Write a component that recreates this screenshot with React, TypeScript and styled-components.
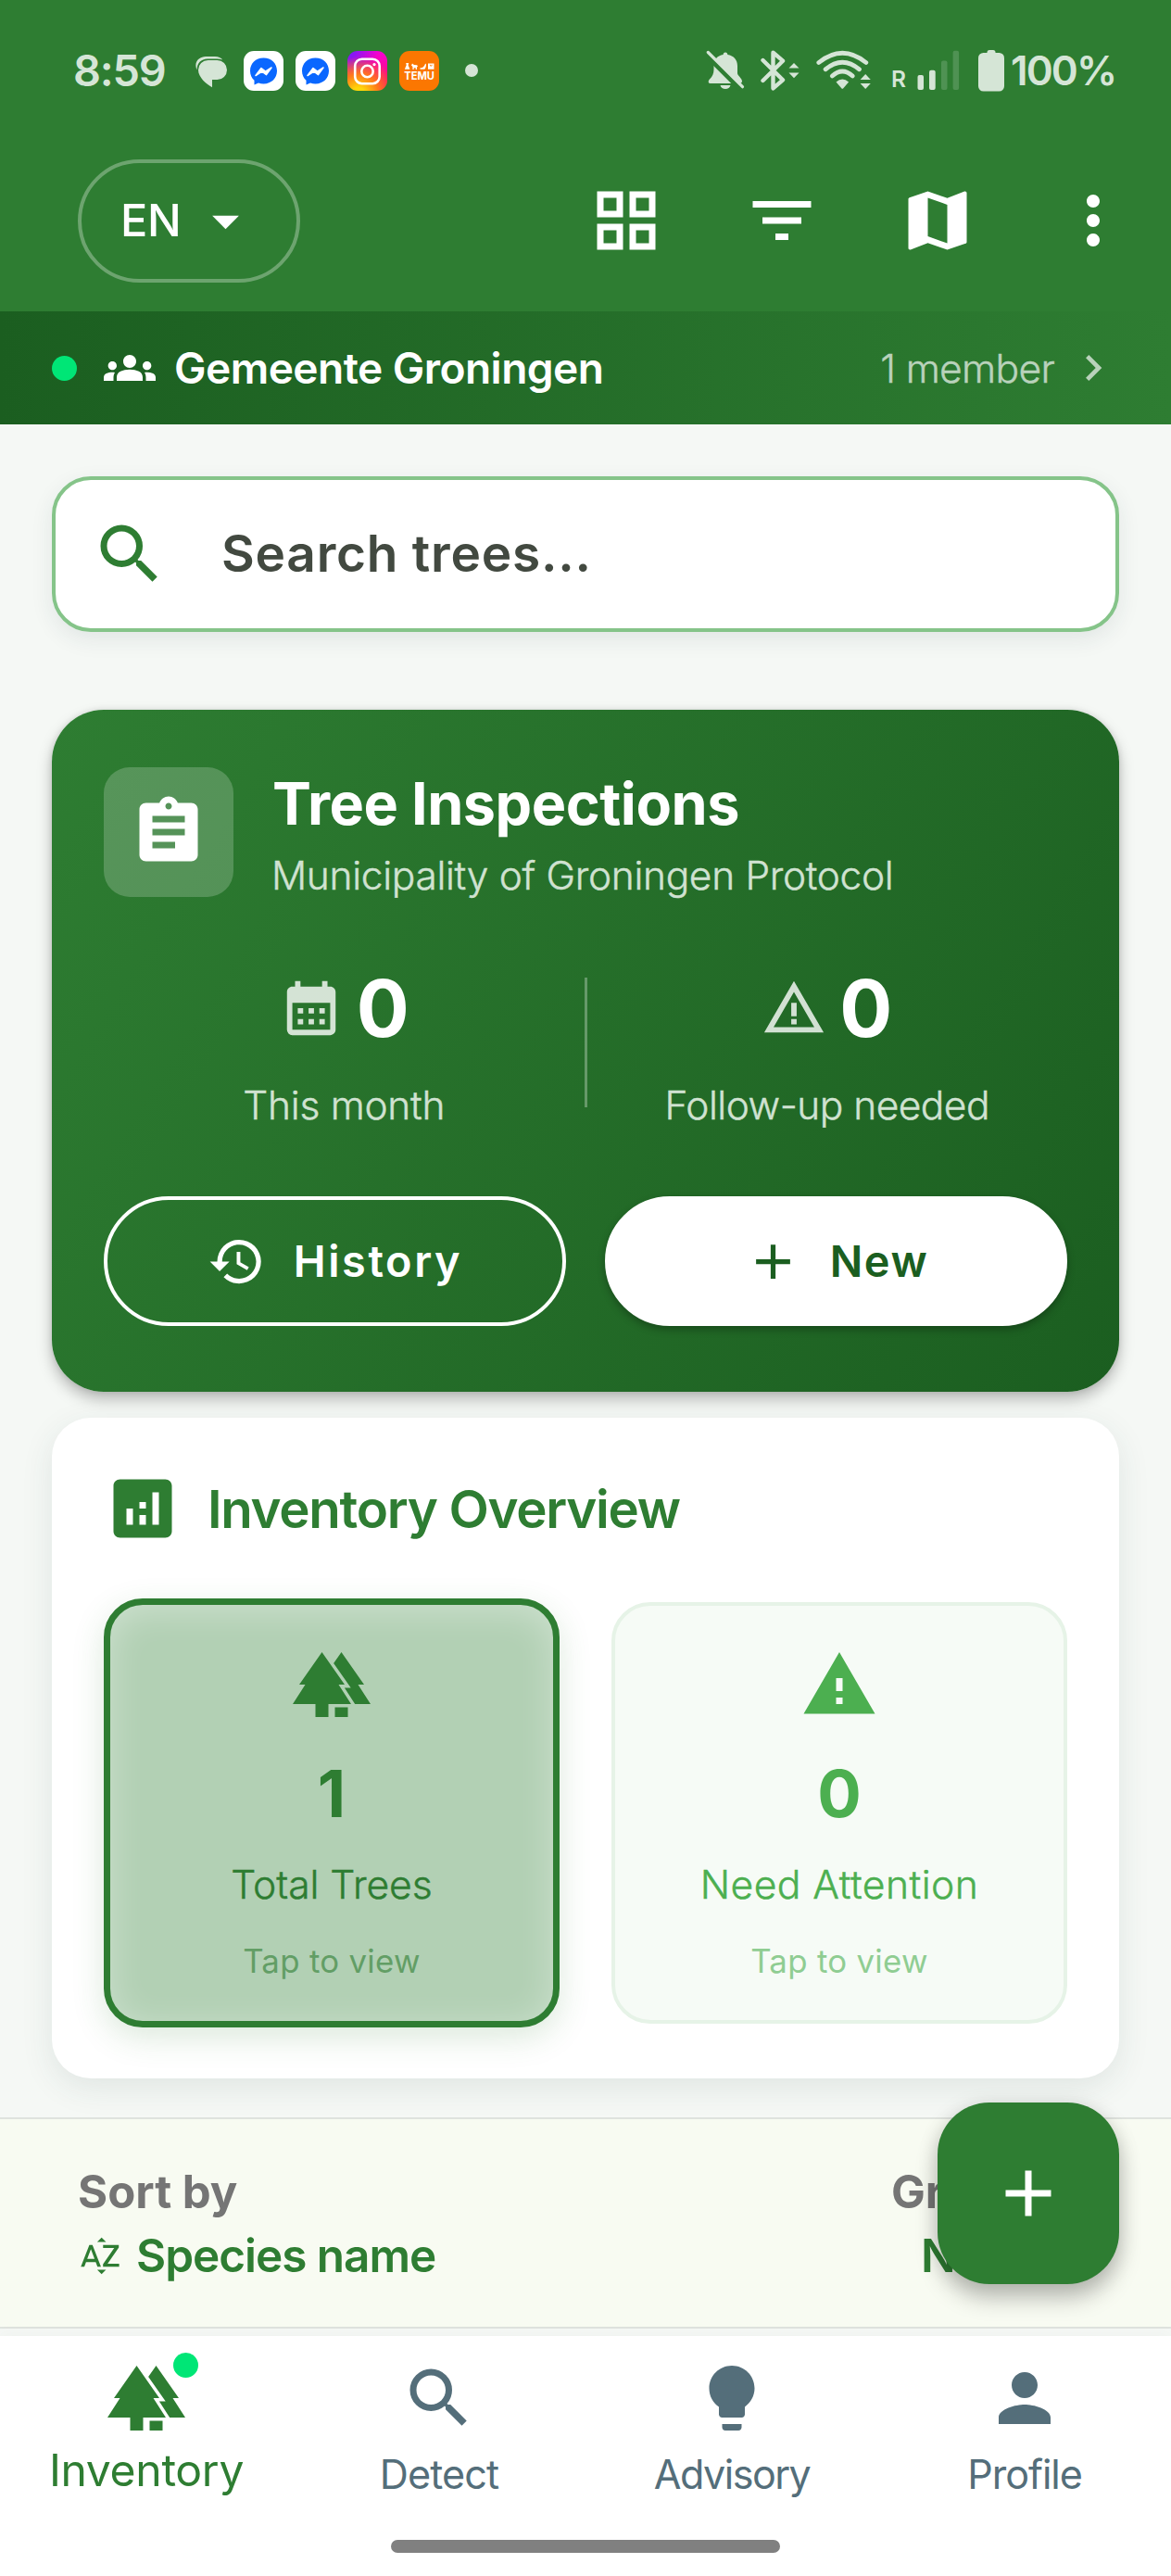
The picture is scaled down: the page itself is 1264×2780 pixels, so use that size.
import React from 'react';
import styled, { createGlobalStyle, css } from 'styled-components';
import {
  MdAdd,
  MdAnalytics,
  MdArrowDropDown,
  MdAssignment,
  MdCalendarMonth,
  MdChevronRight,
  MdFilterList,
  MdForest,
  MdGridView,
  MdGroups,
  MdHistory,
  MdLightbulb,
  MdMap,
  MdMoreVert,
  MdPerson,
  MdSearch,
  MdSortByAlpha,
  MdWarning,
  MdWarningAmber,
} from 'react-icons/md';

const color = {
  primary: '#2e7d32',
  primaryDark: '#1b5e20',
  accent: '#00e676',
  light: '#4caf50',
  page: '#f5f8f5',
  status: '#d5e5d6',
  nav: '#546e7a',
};

/* A weight between light and regular. */
const bookWeight = css`
  font-weight: 300;
  -webkit-text-stroke: 0.45px currentColor;
`;

const GlobalStyle = createGlobalStyle`
  * { box-sizing: border-box; }
  body {
    margin: 0;
    background: ${color.page};
    font-family: Inter, "Liberation Sans", sans-serif;
  }
  svg { display: block; flex: none; }
`;

const Screen = styled.div`
  position: relative;
  display: flex;
  flex-direction: column;
  width: 1264px;
  height: 2780px;
  overflow: hidden;
  background: ${color.page};
`;

/* ---------- status bar ---------- */

const Header = styled.header`
  height: 336px;
  background: ${color.primary};
`;

const StatusBar = styled.div`
  display: flex;
  align-items: center;
  justify-content: space-between;
  height: 152px;
  padding: 0 61px 0 79px;
  color: ${color.status};
`;

const StatusGroup = styled.div`
  display: flex;
  align-items: center;
  height: 44px;
`;

const Clock = styled.span`
  width: 132px;
  font-size: 46.8px;
  font-weight: 600;
  letter-spacing: -1.2px;
  line-height: 44px;
`;

const AppTile = styled.span<{ $bg: string; $gap: number }>`
  width: 43px;
  height: 43px;
  margin-left: ${(p) => p.$gap}px;
  border-radius: 11px;
  background: ${(p) => p.$bg};
  overflow: hidden;
`;

const MoreDot = styled.span`
  width: 14px;
  height: 14px;
  margin-left: 28px;
  border-radius: 50%;
  background: ${color.status};
`;

const StatusIcon = styled.span<{ $gap?: number }>`
  margin-left: ${(p) => p.$gap ?? 0}px;
`;

const Roaming = styled.span`
  width: 17px;
  margin: 0 11px 0 21px;
  align-self: flex-end;
  font-size: 24.5px;
  font-weight: 600;
  line-height: 26px;
`;

const BatteryText = styled.span`
  width: 112px;
  margin-left: 7px;
  font-size: 44px;
  font-weight: 600;
  letter-spacing: -1.9px;
  line-height: 44px;
  white-space: nowrap;
`;

/* ---------- toolbar ---------- */

const Toolbar = styled.div`
  display: flex;
  align-items: center;
  justify-content: space-between;
  height: 172px;
  padding-left: 84px;
  color: #fff;
`;

const LanguagePill = styled.button`
  display: flex;
  align-items: center;
  gap: 14px;
  width: 240px;
  height: 133px;
  padding: 0 0 0 42px;
  border: 4px solid rgba(255, 255, 255, 0.3);
  border-radius: 67px;
  background: none;
  color: inherit;
  font: 500 48.6px/60px Inter, sans-serif;
  letter-spacing: -0.3px;
`;

const ToolbarActions = styled.div`
  display: flex;
`;

const ToolbarButton = styled.button`
  display: flex;
  justify-content: center;
  width: 168px;
  padding: 0;
  border: 0;
  background: none;
  color: inherit;
  font-size: 84px;
`;

/* ---------- organisation banner ---------- */

const Banner = styled.div`
  display: flex;
  align-items: center;
  flex: none;
  height: 122px;
  padding: 0 56px;
  background: linear-gradient(90deg, ${color.primaryDark}, ${color.primary});
  color: #fff;
`;

const OnlineDot = styled.span`
  width: 27px;
  height: 27px;
  margin-right: 29px;
  border-radius: 50%;
  background: ${color.accent};
`;

const BannerName = styled.span`
  flex: 1;
  margin-left: 20px;
  font-size: 46.1px;
  font-weight: 600;
  letter-spacing: -0.55px;
`;

const BannerMeta = styled.span`
  display: flex;
  align-items: center;
  gap: 14px;
  color: #b9d2bb;
  font-size: 42.6px;
  ${bookWeight}
  letter-spacing: -0.72px;
`;

/* ---------- content ---------- */

const Content = styled.main`
  display: flex;
  flex-direction: column;
  padding: 56px 56px 0;
`;

const SearchField = styled.label`
  display: flex;
  align-items: center;
  height: 168px;
  padding: 0 38px;
  border: 4px solid #85c489;
  border-radius: 42px;
  background: #fff;
  box-shadow: 0 8px 24px rgba(38, 60, 66, 0.09);
  color: ${color.primary};
  font-size: 84px;
`;

const SearchText = styled.span`
  margin-left: 57px;
  padding-bottom: 3px;
  color: #424940;
  font-size: 55px;
  font-weight: 600;
  letter-spacing: 0.75px;
  line-height: 66px;
`;

const InspectionCard = styled.section`
  height: 736px;
  margin-top: 84px;
  padding: 62px 56px 71px;
  border-radius: 56px;
  background: linear-gradient(122.5deg, ${color.primary}, ${color.primaryDark});
  box-shadow: 0 8px 16px rgba(0, 0, 0, 0.26), 0 0 6px rgba(0, 0, 0, 0.1);
  color: #fff;
`;

const CardHead = styled.div`
  display: flex;
  align-items: flex-start;
  gap: 42px;
  height: 147px;
`;

const CardBadge = styled.div`
  display: flex;
  align-items: center;
  justify-content: center;
  width: 140px;
  height: 140px;
  border-radius: 28px;
  background: rgba(255, 255, 255, 0.2);
  font-size: 84px;
`;

const CardTitle = styled.h2`
  margin: 6px 0 14px;
  font-size: 62.9px;
  font-weight: 700;
  letter-spacing: -0.47px;
  line-height: 66px;
`;

const CardSubtitle = styled.p`
  margin: 0 0 0 -1px;
  color: #d0e2d1;
  font-size: 42.4px;
  ${bookWeight}
  letter-spacing: -0.3px;
  line-height: 61px;
`;

const Stats = styled.div`
  display: flex;
  height: 177px;
  margin-top: 71px;
`;

const Stat = styled.div`
  display: flex;
  flex: 1;
  flex-direction: column;
  align-items: center;
  gap: 33px;
`;

const StatValue = styled.div`
  display: flex;
  align-items: center;
  gap: 14px;
  height: 84px;
  font-size: 84.6px;
  font-weight: 700;
  line-height: 84px;

  svg {
    font-size: 70px;
    opacity: 0.8;
  }
`;

const StatLabel = styled.div<{ $tracking: number }>`
  color: #d0e2d1;
  font-size: 42.4px;
  ${bookWeight}
  letter-spacing: ${(p) => p.$tracking}px;
  line-height: 60px;
`;

const StatDivider = styled.div`
  width: 3px;
  height: 140px;
  margin-top: 9px;
  background: rgba(255, 255, 255, 0.3);
`;

const CardActions = styled.div`
  display: flex;
  gap: 42px;
  margin-top: 68px;
`;

const ActionButton = styled.button<{ $filled?: boolean }>`
  display: flex;
  flex: 1;
  align-items: center;
  justify-content: center;
  gap: 30px;
  height: 140px;
  padding: 0;
  border: 4px solid #fff;
  border-radius: 70px;
  background: none;
  color: #fff;
  font: 600 46.8px/60px Inter, sans-serif;
  letter-spacing: 2.6px;

  svg {
    font-size: 63px;
  }

  ${(p) =>
    p.$filled &&
    css`
      background: #fff;
      color: ${color.primaryDark};
      letter-spacing: 1.6px;
      box-shadow: 0 4px 8px rgba(0, 0, 0, 0.28);
    `}
`;

const OverviewCard = styled.section`
  height: 713px;
  margin-top: 28px;
  padding: 56px;
  border-radius: 42px;
  background: #fff;
  box-shadow: 0 10px 34px rgba(38, 70, 66, 0.1);
`;

const OverviewHead = styled.div`
  display: flex;
  align-items: center;
  gap: 28px;
  height: 84px;
  color: ${color.primary};

  svg {
    font-size: 84px;
  }
`;

const OverviewTitle = styled.h3`
  margin: 0;
  font-size: 56.4px;
  font-weight: 600;
  letter-spacing: -1.3px;
`;

const Tiles = styled.div`
  display: flex;
  align-items: center;
  justify-content: space-between;
  height: 463px;
  margin-top: 55px;
`;

const Tile = styled.div<{ $selected?: boolean }>`
  display: flex;
  flex-direction: column;
  align-items: center;
  justify-content: center;
  width: 492px;
  height: 455px;
  border: 4px solid #e6f3e7;
  border-radius: 42px;
  background: #f6fbf6;
  color: ${color.light};

  svg {
    font-size: 84px;
  }

  ${(p) =>
    p.$selected &&
    css`
      height: 463px;
      border: 7px solid ${color.primary};
      background: #b2d0b4;
      box-shadow: 0 11px 34px rgba(46, 125, 50, 0.17), inset 0 6px 38px rgba(255, 255, 255, 0.36);
      color: ${color.primary};
    `}
`;

const TileValue = styled.div`
  margin-top: 34px;
  font-size: 70.5px;
  font-weight: 700;
  line-height: 84px;
`;

const TileLabel = styled.div<{ $tracking: number }>`
  margin-top: 28px;
  font-size: 42.6px;
  ${bookWeight}
  letter-spacing: ${(p) => p.$tracking}px;
  line-height: 56px;
`;

const TileHint = styled.div`
  margin-top: 32px;
  font-size: 34.8px;
  font-weight: 400;
  letter-spacing: 0.3px;
  line-height: 44px;
  opacity: 0.6;
`;

/* ---------- sort bar ---------- */

const SortBar = styled.div`
  display: flex;
  justify-content: space-between;
  flex: none;
  height: 228px;
  margin-top: 42px;
  padding: 44px 84px 0;
  border-top: 2px solid #dfe3de;
  border-bottom: 2px solid #dfe3de;
  background: #f8fbf2;
`;

const SortColumn = styled.div<{ $width?: number }>`
  width: ${(p) => (p.$width ? `${p.$width}px` : 'auto')};
  white-space: nowrap;
`;

const SortLabel = styled.div`
  color: #757575;
  font-size: 49.1px;
  font-weight: 700;
  line-height: 68px;
`;

const SortValue = styled.div<{ $indent?: number }>`
  display: flex;
  align-items: center;
  gap: 14px;
  padding-left: ${(p) => p.$indent ?? 0}px;
  color: ${color.primary};
  font-size: 49.5px;
  font-weight: 600;
  letter-spacing: -1.03px;
  line-height: 71px;
`;

const Fab = styled.button`
  position: absolute;
  right: 56px;
  bottom: 315px;
  display: flex;
  align-items: center;
  justify-content: center;
  width: 196px;
  height: 196px;
  padding: 0;
  border: 0;
  border-radius: 56px;
  background: ${color.primary};
  box-shadow: 0 16px 24px rgba(0, 0, 0, 0.22), 0 3px 22px rgba(0, 0, 0, 0.13);
  color: #fff;
  font-size: 84px;
`;

/* ---------- bottom navigation ---------- */

const BottomNav = styled.nav`
  flex: none;
  height: 259px;
  margin-top: 8px;
  background: #fff;
  box-shadow: 0 -4px 14px rgba(0, 0, 0, 0.025);
`;

const NavItems = styled.div`
  display: grid;
  grid-template-columns: repeat(4, 1fr);
  height: 220px;
`;

const NavItem = styled.div<{ $active?: boolean; $tracking: number }>`
  display: flex;
  flex-direction: column;
  align-items: center;
  gap: ${(p) => (p.$active ? 6 : 10)}px;
  padding-top: 25px;
  color: ${(p) => (p.$active ? color.primary : color.nav)};
  font-size: ${(p) => (p.$active ? 48.1 : 43.1)}px;
  font-weight: 400;
  letter-spacing: ${(p) => p.$tracking}px;
  line-height: 60px;
`;

const NavIcon = styled.span`
  position: relative;
  font-size: 84px;
`;

const NavDot = styled.span`
  position: absolute;
  top: -7px;
  right: -14px;
  width: 27px;
  height: 27px;
  border-radius: 50%;
  background: ${color.accent};
`;

const HomeIndicator = styled.div`
  width: 420px;
  height: 14px;
  margin: 0 auto;
  border-radius: 7px;
  background: #808080;
`;

/* ---------- drawings for the status bar ---------- */

const ChatBubbles = () => (
  <svg width="34" height="44" viewBox="0 0 34 44" fill={color.status}>
    <path d="M1.6 21.5C-2.5 12.500 4.500 7 11 7H21c4 0 6.500 1.300 8.300 3.600C27.500 10 25.500 9.600 23.500 9.600H13C6 9.600 1.600 14.500 1.600 21.500Z" />
    <path d="M13.500 11h10a10.500 10.500 0 0 1 0 21H18v8.200C12 37 3 29.500 3 21.500A10.500 10.500 0 0 1 13.500 11Z" />
  </svg>
);

const MessengerMark = () => (
  <svg width="43" height="43" viewBox="0 0 43 43">
    <path
      d="M21.500 7.500C13 7.500 7 13.500 7 21.500c0 4.200 1.700 7.700 4.500 10.300v4.700l4.500-2c1.700.6 3.500.9 5.500.9 8.500 0 14.500-6 14.500-13.900S30 7.500 21.500 7.500Z"
      fill="#0a67ff"
    />
    <path
      d="M13 26.500l6-8 4.500 3.600 6.500-4.100-5.500 7.600-4.700-3.500Z"
      fill="#fff"
      stroke="#fff"
      strokeWidth="1.500"
      strokeLinejoin="round"
    />
  </svg>
);

const InstagramMark = () => (
  <svg width="43" height="43" viewBox="0 0 43 43" fill="none" stroke="#fff" strokeWidth="2.600">
    <rect x="8.200" y="8.700" width="26.500" height="26.500" rx="7.500" />
    <circle cx="21.500" cy="22" r="6.200" />
    <circle cx="29" cy="14.600" r="1.600" fill="#fff" stroke="none" />
  </svg>
);

const TemuMark = () => (
  <svg width="43" height="43" viewBox="0 0 43 43" fill="#fff">
    <path d="M7.200 13h3l-.6 2.300 1.800 4.500H5.800l1.900-4.500Z" />
    <path d="M14 13.500l2 1.500 3.200.3.800 1.500-1 .8v2.400h-1.300v-1.800h-2V20h-1.300v-3l-1.400-1.500Z" />
    <path d="M22.500 18.300c3 .3 4.400-1.500 5.700-4.800l.8 1c0 2-.7 5-2 5.300h-4.500Z" />
    <path d="M31 13.500h6.500v6.300H31Zm1.800 1.300c.2 2.400 2.700 2.400 2.900 0l-.8 0c-.2 1.300-1.200 1.300-1.400 0Z" fillRule="evenodd" />
    <text
      x="5.200"
      y="30.800"
      fontFamily="Inter, sans-serif"
      fontSize="11.600"
      fontWeight="700"
      textLength="32.800"
      lengthAdjust="spacingAndGlyphs"
    >
      TEMU
    </text>
  </svg>
);

const MutedBell = () => (
  <svg width="42" height="44" viewBox="0 0 42 44" fill={color.status}>
    <path d="M21 2.500c1.500 0 2.300 1 2.400 2.400C30 6 34 10.500 34 17v8c0 2.500 5 5.500 5 8.500 0 1.500-.8 2.500-2.500 2.500H4.500C2 36 2.500 33 4 31.500c3-3 4.500-6 4.500-10.500V17C8.500 10.500 12 6 18.600 4.900c.1-1.400.9-2.400 2.400-2.400Z" />
    <path d="M15.500 38h11c-.6 2.500-2.700 4-5.500 4s-4.900-1.500-5.500-4Z" />
    <path d="M-2 2.500 37.500 42" stroke={color.primary} strokeWidth="6" />
    <path d="M2.300 2.500 39.500 39.700" stroke={color.status} strokeWidth="3.200" strokeLinecap="round" />
  </svg>
);

const BluetoothLinked = () => (
  <svg width="43" height="44" viewBox="0 0 43 44" fill={color.status}>
    <path
      d="M3.500 11 25 32.300 14.500 41.300V2.700L25 11.700 3.500 33"
      fill="none"
      stroke={color.status}
      strokeWidth="4.400"
      strokeLinecap="round"
      strokeLinejoin="round"
    />
    <path d="M37 14l5.500 5.600h-11ZM37 30.200l5.500-5.600h-11Z" />
  </svg>
);

const WifiFull = () => (
  <svg width="60" height="44" viewBox="0 0 60 44" fill={color.status}>
    <g fill="none" stroke={color.status} strokeWidth="4.800" strokeLinecap="round">
      <path d="M2.800 13.500Q28.300-7 53.800 13.500" />
      <path d="M10 20.800Q28.300 5.500 46.600 20.800" />
      <path d="M17.300 28Q28.300 18 39.300 28" />
    </g>
    <path d="M21.500 34.500Q28.300 28.500 35.100 34.500L29.300 41.200Q28.300 42.300 27.300 41.200Z" />
    <path d="M53.200 26l5.600 6h-11.200ZM53.200 42l5.600-6h-11.200Z" />
  </svg>
);

const SignalBars = () => (
  <svg width="46" height="44" viewBox="0 0 46 44" fill={color.status}>
    <rect x="0.500" y="27" width="6.500" height="16" rx="2" />
    <rect x="13" y="21.700" width="6.700" height="21.300" rx="2" />
    <rect x="26" y="11.500" width="6.500" height="31.500" rx="2" opacity="0.200" />
    <rect x="38.600" y="0.800" width="6.500" height="42.200" rx="2" opacity="0.200" />
  </svg>
);

const BatteryFull = () => (
  <svg width="28" height="45" viewBox="0 0 28 45" fill={color.status}>
    <path d="M9.500 4.500V2.500A2.500 2.500 0 0 1 12 0h4a2.500 2.500 0 0 1 2.500 2.500v2Z" />
    <rect y="3" width="28" height="41.500" rx="5.500" />
  </svg>
);

const instagramGradient =
  'radial-gradient(circle at 28% 108%, #ffd60a 0 12%, #ff7a1a 38%, rgba(255, 20, 110, 0) 72%), radial-gradient(circle at 0% 0%, #6a1cff 0%, rgba(240, 0, 200, 0) 55%), linear-gradient(180deg, #f500d8, #ff0f6b 75%)';

const navItems = [
  { label: 'Inventory', icon: <MdForest />, tracking: -0.33, active: true },
  { label: 'Detect', icon: <MdSearch />, tracking: -0.9 },
  { label: 'Advisory', icon: <MdLightbulb />, tracking: -1.5 },
  { label: 'Profile', icon: <MdPerson />, tracking: -1.05 },
];

export default function App() {
  return (
    <Screen>
      <GlobalStyle />
      <Header>
        <StatusBar>
          <StatusGroup>
            <Clock>8:59</Clock>
            <ChatBubbles />
            <AppTile $bg="#fff" $gap={18}>
              <MessengerMark />
            </AppTile>
            <AppTile $bg="#fff" $gap={13}>
              <MessengerMark />
            </AppTile>
            <AppTile $bg={instagramGradient} $gap={13}>
              <InstagramMark />
            </AppTile>
            <AppTile $bg="#fb7701" $gap={13}>
              <TemuMark />
            </AppTile>
            <MoreDot />
          </StatusGroup>
          <StatusGroup>
            <StatusIcon>
              <MutedBell />
            </StatusIcon>
            <StatusIcon $gap={16}>
              <BluetoothLinked />
            </StatusIcon>
            <StatusIcon $gap={18}>
              <WifiFull />
            </StatusIcon>
            <Roaming>R</Roaming>
            <SignalBars />
            <StatusIcon $gap={20}>
              <BatteryFull />
            </StatusIcon>
            <BatteryText>100%</BatteryText>
          </StatusGroup>
        </StatusBar>
        <Toolbar>
          <LanguagePill>
            EN
            <MdArrowDropDown size={69} />
          </LanguagePill>
          <ToolbarActions>
            <ToolbarButton>
              <MdGridView />
            </ToolbarButton>
            <ToolbarButton>
              <MdFilterList />
            </ToolbarButton>
            <ToolbarButton>
              <MdMap />
            </ToolbarButton>
            <ToolbarButton>
              <MdMoreVert />
            </ToolbarButton>
          </ToolbarActions>
        </Toolbar>
      </Header>

      <Banner>
        <OnlineDot />
        <MdGroups size={56} />
        <BannerName>Gemeente Groningen</BannerName>
        <BannerMeta>
          1 member
          <MdChevronRight size={56} />
        </BannerMeta>
      </Banner>

      <Content>
        <SearchField>
          <MdSearch />
          <SearchText>Search trees...</SearchText>
        </SearchField>

        <InspectionCard>
          <CardHead>
            <CardBadge>
              <MdAssignment />
            </CardBadge>
            <div>
              <CardTitle>Tree Inspections</CardTitle>
              <CardSubtitle>Municipality of Groningen Protocol</CardSubtitle>
            </div>
          </CardHead>
          <Stats>
            <Stat>
              <StatValue>
                <MdCalendarMonth />0
              </StatValue>
              <StatLabel $tracking={-0.24}>This month</StatLabel>
            </Stat>
            <StatDivider />
            <Stat>
              <StatValue>
                <MdWarningAmber />0
              </StatValue>
              <StatLabel $tracking={-0.5}>Follow-up needed</StatLabel>
            </Stat>
          </Stats>
          <CardActions>
            <ActionButton>
              <MdHistory />
              History
            </ActionButton>
            <ActionButton $filled>
              <MdAdd />
              New
            </ActionButton>
          </CardActions>
        </InspectionCard>

        <OverviewCard>
          <OverviewHead>
            <MdAnalytics />
            <OverviewTitle>Inventory Overview</OverviewTitle>
          </OverviewHead>
          <Tiles>
            <Tile $selected>
              <MdForest />
              <TileValue>1</TileValue>
              <TileLabel $tracking={-0.05}>Total Trees</TileLabel>
              <TileHint>Tap to view</TileHint>
            </Tile>
            <Tile>
              <MdWarning />
              <TileValue>0</TileValue>
              <TileLabel $tracking={0.45}>Need Attention</TileLabel>
              <TileHint>Tap to view</TileHint>
            </Tile>
          </Tiles>
        </OverviewCard>
      </Content>

      <SortBar>
        <SortColumn>
          <SortLabel>Sort by</SortLabel>
          <SortValue>
            <MdSortByAlpha size={49} />
            Species name
          </SortValue>
        </SortColumn>
        <SortColumn $width={218}>
          <SortLabel>Group by</SortLabel>
          <SortValue $indent={32}>None</SortValue>
        </SortColumn>
      </SortBar>

      <BottomNav>
        <NavItems>
          {navItems.map((item) => (
            <NavItem key={item.label} $active={item.active} $tracking={item.tracking}>
              <NavIcon>
                {item.icon}
                {item.active && <NavDot />}
              </NavIcon>
              {item.label}
            </NavItem>
          ))}
        </NavItems>
        <HomeIndicator />
      </BottomNav>

      <Fab>
        <MdAdd />
      </Fab>
    </Screen>
  );
}
